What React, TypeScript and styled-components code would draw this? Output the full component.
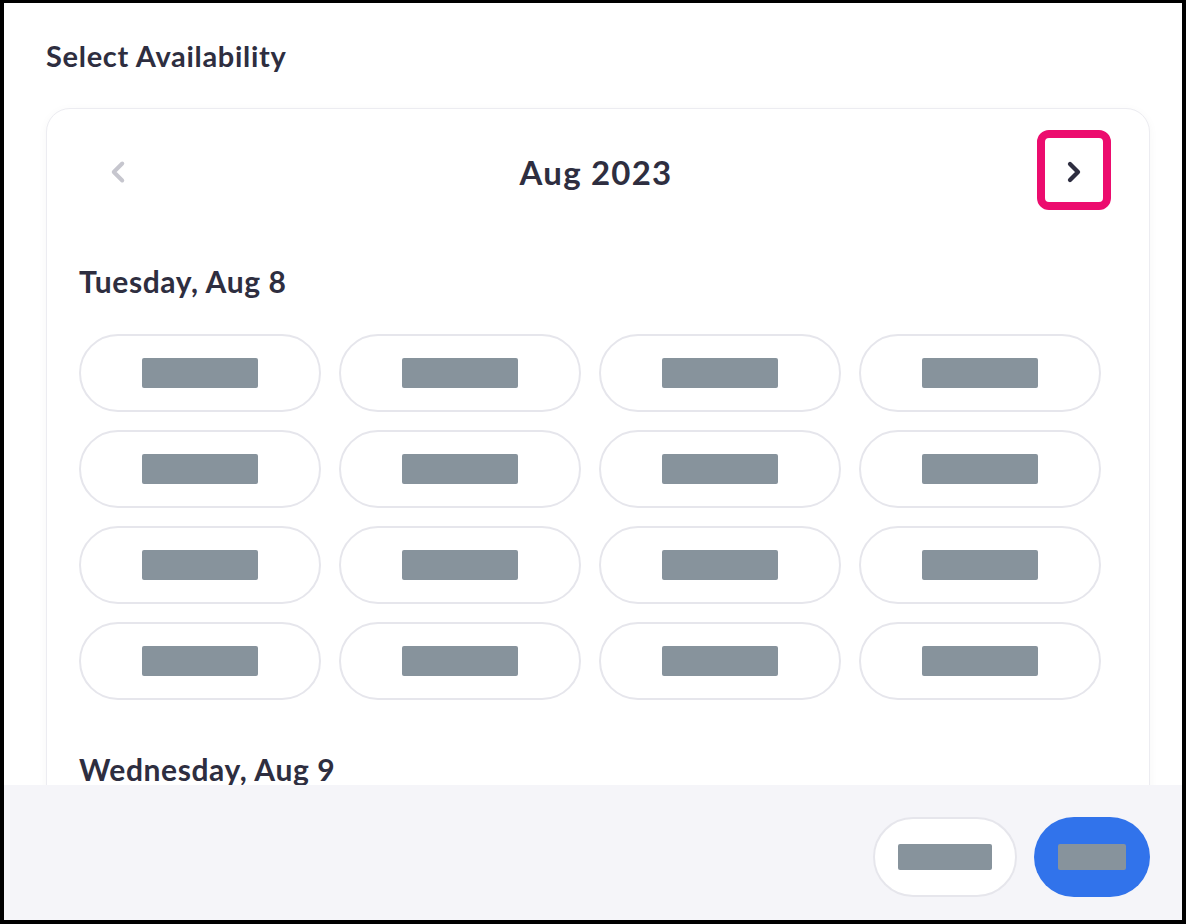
import React from "react";
import styled, { createGlobalStyle } from "styled-components";
import { ChevronLeft, ChevronRight } from "lucide-react";

const GlobalStyle = createGlobalStyle`
  html, body { margin: 0; padding: 0; background: #000; }
  * { box-sizing: border-box; }
  body { font-family: "Lato", "Noto Sans", sans-serif; }
`;

const Frame = styled.div`
  width: 1186px;
  height: 924px;
  border: 4px solid #000;
  border-top-width: 3px;
  background: #fff;
  display: flex;
  flex-direction: column;
  overflow: hidden;
`;

const Body = styled.div`
  flex: 1;
  min-height: 0;
  overflow: hidden;
  padding: 37px 0 0 42px;
`;

const Title = styled.h1`
  margin: 0;
  font-size: 29px;
  line-height: 32px;
  font-weight: 700;
  color: #2e2e40;
  letter-spacing: 0.7px;
`;

const Card = styled.div`
  margin-top: 36px;
  width: 1104px;
  border: 1px solid #ececf1;
  border-radius: 24px;
  background: #fff;
  box-shadow: 0 2px 10px rgba(20, 20, 60, 0.04);
  padding: 21px 48px 40px 32px;
  min-height: 800px;
`;

const Header = styled.div`
  display: flex;
  align-items: center;
  justify-content: space-between;
  margin: 0 -10px 0 2px;
  height: 80px;
`;

const NavButton = styled.button<{ $active?: boolean }>`
  width: 74px;
  height: 80px;
  display: flex;
  align-items: center;
  justify-content: center;
  background: #fff;
  border: 8px solid ${(p) => (p.$active ? "#ec0c6e" : "transparent")};
  border-radius: 12px;
  padding: 4px 0 0 0;
  color: ${(p) => (p.$active ? "#2e2e40" : "#c6c6ce")};
  cursor: pointer;
`;

const Month = styled.div`
  font-size: 33px;
  font-weight: 700;
  color: #2e2e40;
  line-height: 40px;
  letter-spacing: 1.2px;
  padding-top: 3px;
`;

const DayLabel = styled.h2<{ $top: number }>`
  margin: ${(p) => p.$top}px 0 0 0;
  font-size: 30px;
  line-height: 36px;
  font-weight: 700;
  color: #2e2e40;
  letter-spacing: 0.6px;
`;

const SlotGrid = styled.div`
  margin-top: 35px;
  display: grid;
  grid-template-columns: repeat(4, 242px);
  gap: 18px;
`;

const Slot = styled.button`
  height: 78px;
  border: 2px solid #e6e6ec;
  border-radius: 39px;
  background: #fff;
  display: flex;
  align-items: center;
  justify-content: center;
  padding: 0;
`;

const Placeholder = styled.span<{ $w: number; $h: number }>`
  display: block;
  width: ${(p) => p.$w}px;
  height: ${(p) => p.$h}px;
  background: #87939c;
  border-radius: 2px;
`;

const Footer = styled.div`
  height: 135px;
  flex-shrink: 0;
  background: #f5f5f9;
  display: flex;
  justify-content: flex-end;
  align-items: flex-start;
  gap: 17px;
  padding: 32px 32px 0 0;
`;

const FooterButton = styled.button<{ $primary?: boolean }>`
  height: 80px;
  width: ${(p) => (p.$primary ? 116 : 144)}px;
  border-radius: 40px;
  border: ${(p) => (p.$primary ? "none" : "2px solid #e6e6ec")};
  background: ${(p) => (p.$primary ? "#3173eb" : "#fff")};
  display: flex;
  align-items: center;
  justify-content: center;
  padding: 0;
`;

const slots = Array.from({ length: 16 }, (_, i) => i);

export default function App() {
  return (
    <>
      <GlobalStyle />
      <Frame>
        <Body>
          <Title>Select Availability</Title>
          <Card>
            <Header>
              <NavButton aria-label="Previous month">
                <ChevronLeft size={34} strokeWidth={2.8} />
              </NavButton>
              <Month>Aug 2023</Month>
              <NavButton $active aria-label="Next month">
                <ChevronRight size={32} strokeWidth={3.2} />
              </NavButton>
            </Header>
            <DayLabel $top={53}>Tuesday, Aug 8</DayLabel>
            <SlotGrid>
              {slots.map((i) => (
                <Slot key={i}>
                  <Placeholder $w={116} $h={30} />
                </Slot>
              ))}
            </SlotGrid>
            <DayLabel $top={51}>Wednesday, Aug 9</DayLabel>
          </Card>
        </Body>
        <Footer>
          <FooterButton>
            <Placeholder $w={94} $h={26} />
          </FooterButton>
          <FooterButton $primary>
            <Placeholder $w={68} $h={26} />
          </FooterButton>
        </Footer>
      </Frame>
    </>
  );
}
